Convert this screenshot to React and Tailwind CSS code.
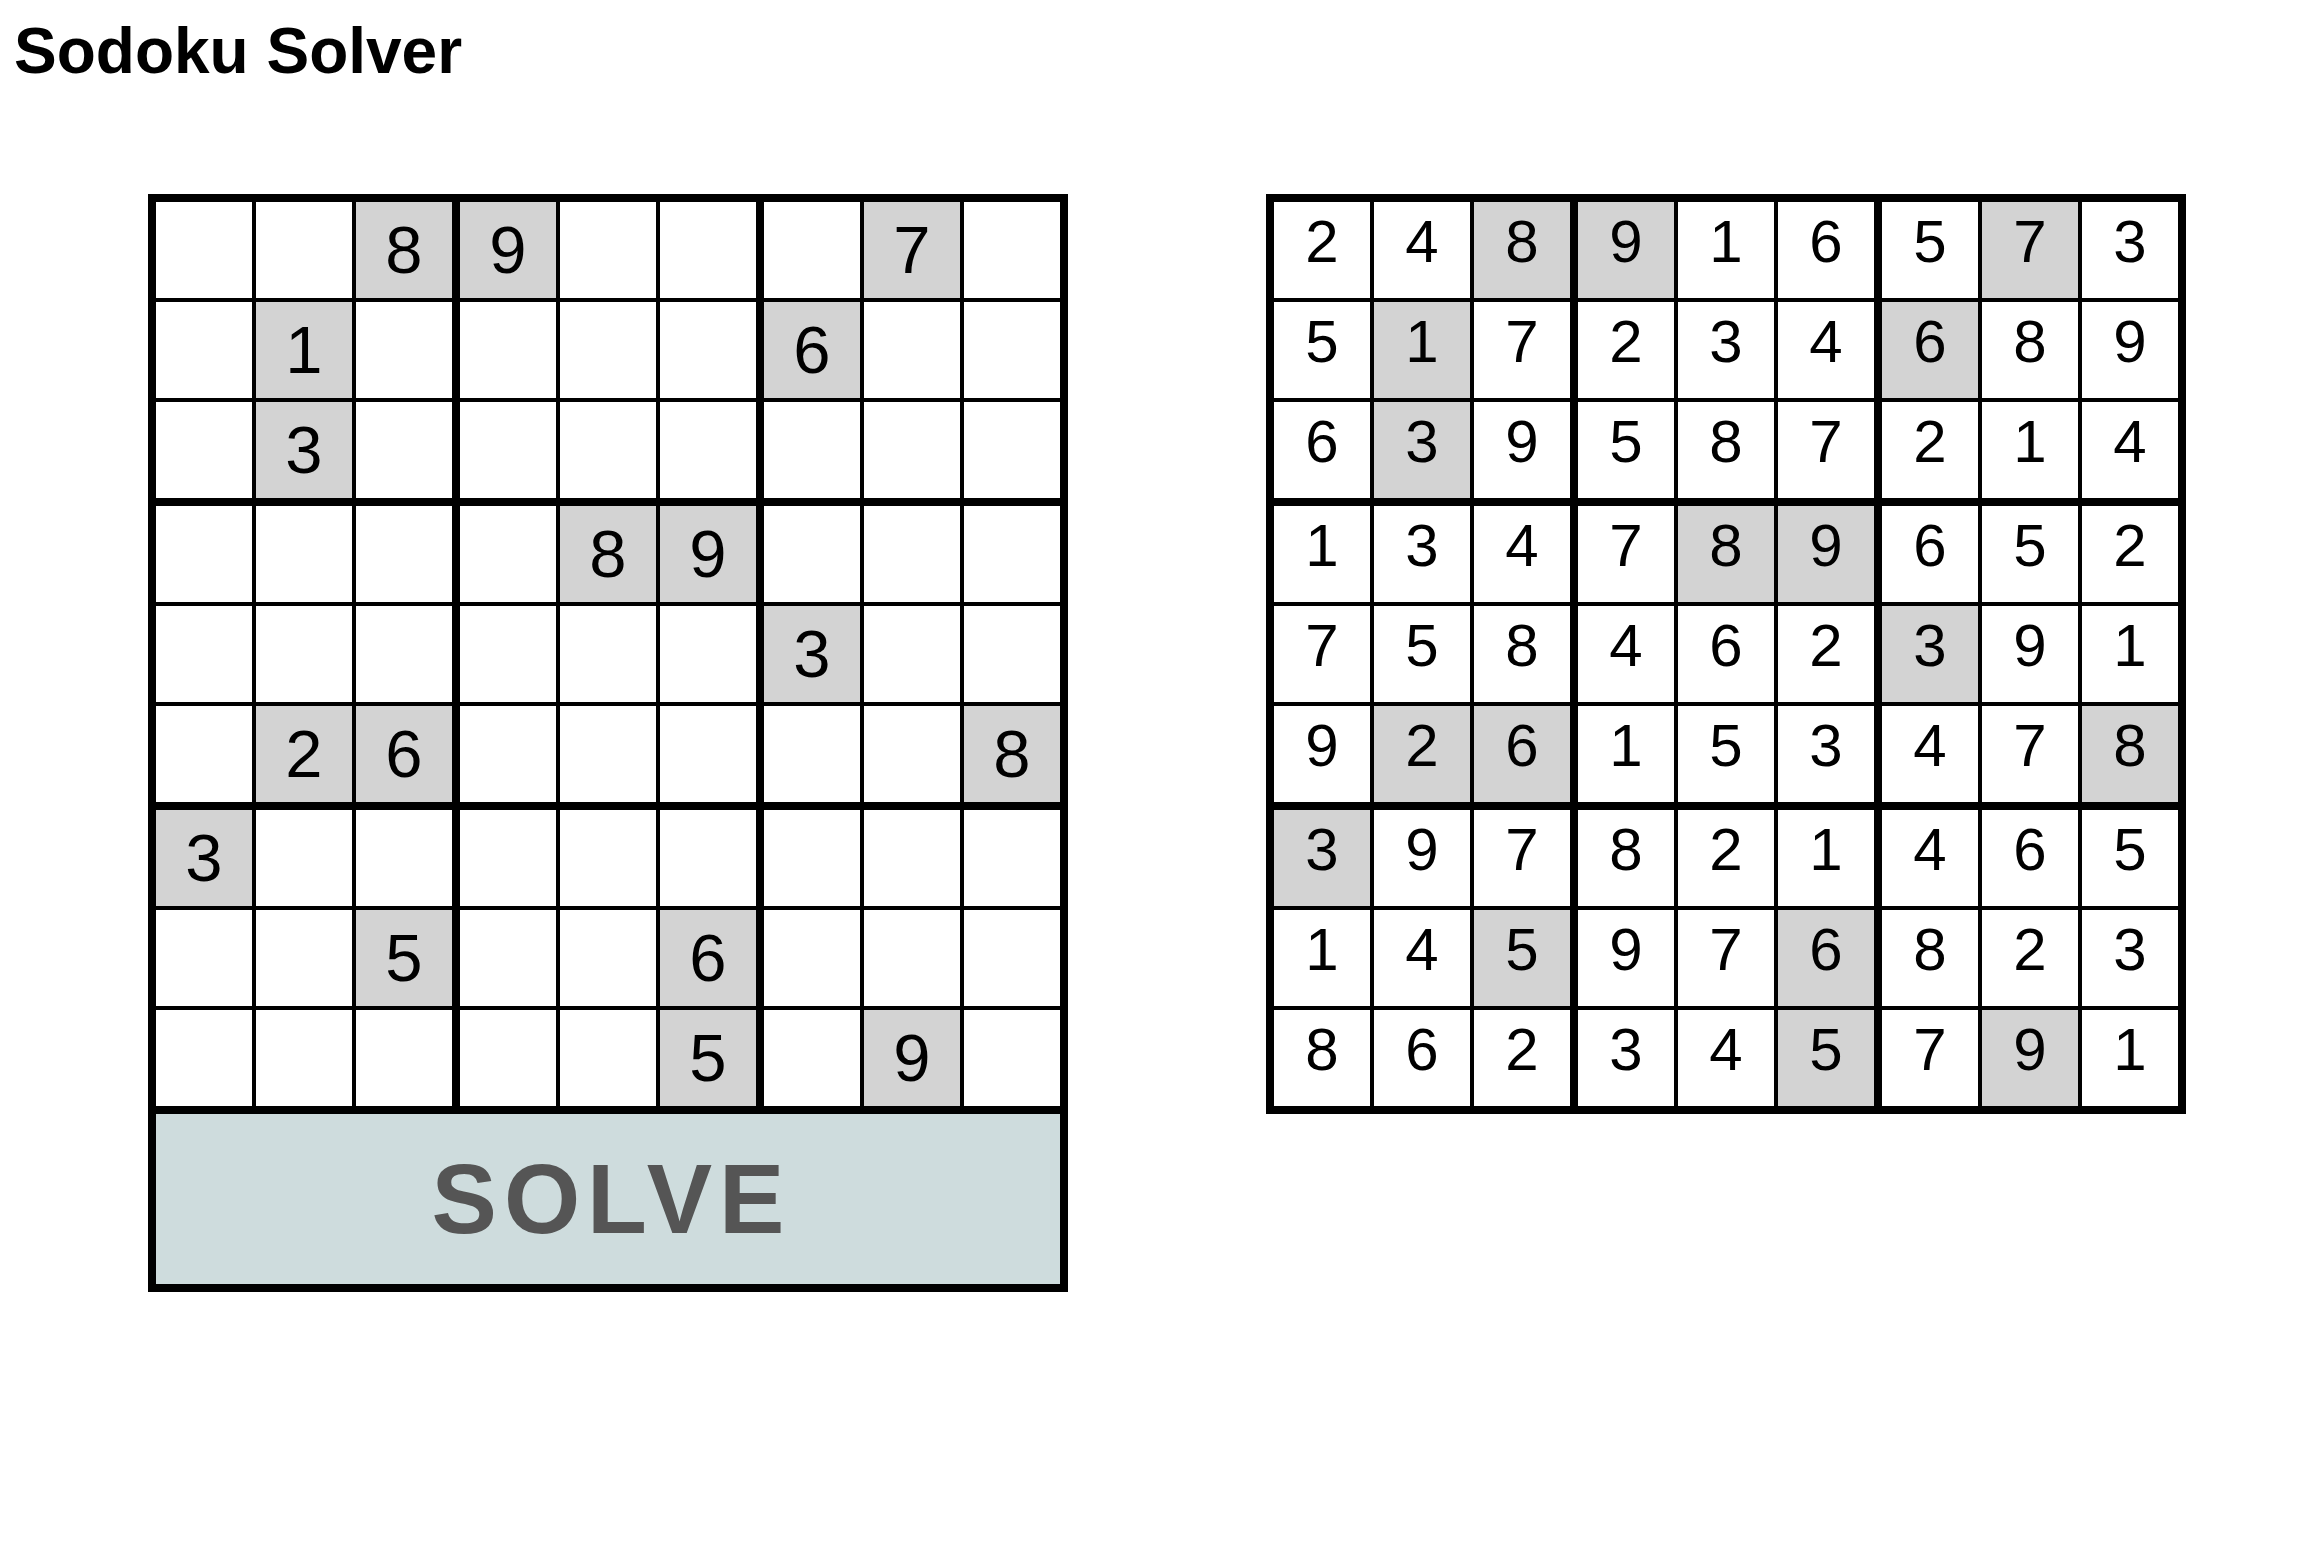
import React from 'react'

const puzzle = [
  '__89___7_',
  '_1____6__',
  '_3_______',
  '____89___',
  '______3__',
  '_26_____8',
  '3________',
  '__5__6___',
  '_____5_9_',
]

const solution = [
  '248916573',
  '517234689',
  '639587214',
  '134789652',
  '758462391',
  '926153478',
  '397821465',
  '145976823',
  '862345791',
]

const font = { fontFamily: '"Liberation Sans", Arial, Helvetica, sans-serif' }

// 3x3 bands -> 3 rows -> 3 boxes -> 3 cells
const Board = ({ renderCell }) => (
  <div className="flex flex-col gap-[8px] bg-black p-[8px] w-[920px]">
    {[0, 1, 2].map((band) => (
      <div key={band} className="flex flex-col gap-[4px]">
        {[0, 1, 2].map((r) => {
          const row = band * 3 + r
          return (
            <div key={row} className="flex gap-[8px]">
              {[0, 1, 2].map((box) => (
                <div key={box} className="flex gap-[4px]">
                  {[0, 1, 2].map((c) => renderCell(row, box * 3 + c))}
                </div>
              ))}
            </div>
          )
        })}
      </div>
    ))}
  </div>
)

const App = () => {
  const given = (r, c) => puzzle[r][c] !== '_'

  const inputCell = (r, c) => (
    <div
      key={c}
      className={`w-[96px] h-[96px] flex items-center justify-center text-[67px] text-black ${given(r, c) ? 'bg-[#d3d3d3]' : 'bg-white'}`}
    >
      {given(r, c) ? puzzle[r][c] : ''}
    </div>
  )

  const solvedCell = (r, c) => (
    <div
      key={c}
      className={`w-[96px] h-[96px] flex justify-center pt-[5px] text-[60px] leading-[1.15] text-black ${given(r, c) ? 'bg-[#d3d3d3]' : 'bg-white'}`}
    >
      {solution[r][c]}
    </div>
  )

  return (
    <div className="min-h-screen bg-white pt-[15px] pl-[14px]" style={font}>
      <h1 className="text-[64px] font-bold leading-[72px] text-black">Sodoku Solver</h1>
      <div className="flex items-start gap-[198px] mt-[107px] pl-[134px]">
        <div className="flex flex-col">
          <Board renderCell={inputCell} />
          <button className="w-[920px] h-[178px] border-x-[8px] border-b-[8px] border-black bg-[#cedcdd] text-[98px] font-bold tracking-[7px] pl-[7px] text-[#555555] flex items-center justify-center">
            SOLVE
          </button>
        </div>
        <Board renderCell={solvedCell} />
      </div>
    </div>
  )
}

export default App
